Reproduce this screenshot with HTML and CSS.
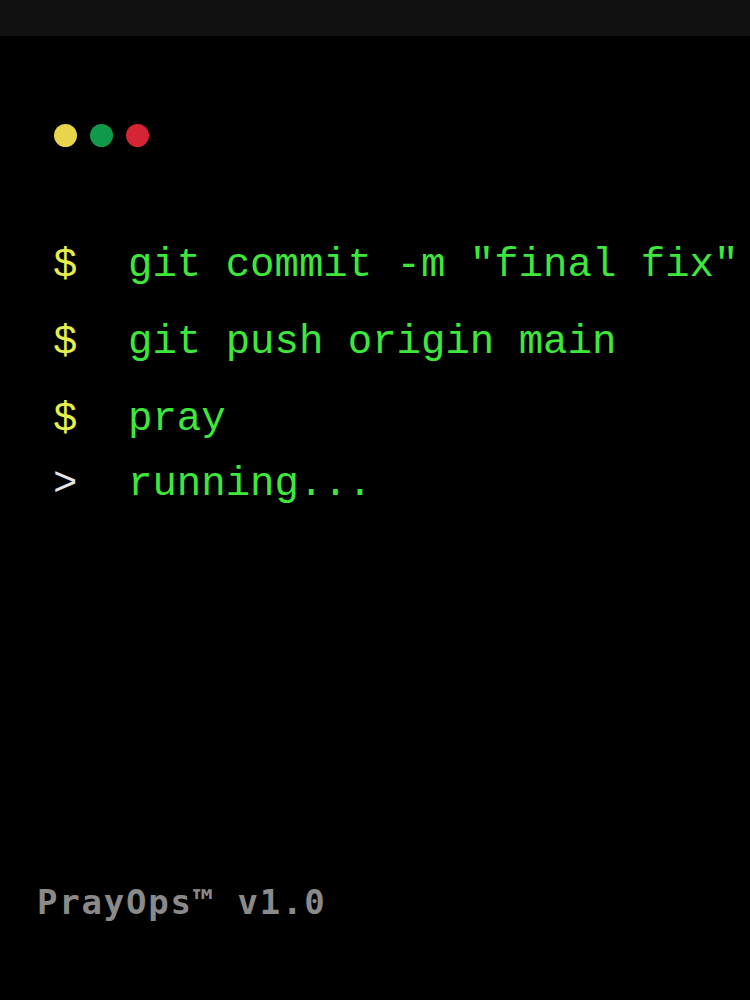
FILE: index.html
```html
<!DOCTYPE html>
<html lang="en">
<head>
<meta charset="utf-8">
<title>PrayOps</title>
<link rel="stylesheet" href="styles.css">
</head>
<body>
<div class="topbar"></div>
<main class="terminal">
  <div class="dots">
    <span class="dot dot-yellow"></span>
    <span class="dot dot-green"></span>
    <span class="dot dot-red"></span>
  </div>
  <div class="lines">
    <div class="line"><span class="prompt">$</span><span class="cmd">git commit -m "final fix"</span></div>
    <div class="line"><span class="prompt">$</span><span class="cmd">git push origin main</span></div>
    <div class="line"><span class="prompt">$</span><span class="cmd">pray</span></div>
    <div class="line line-output"><span class="prompt prompt-out">&gt;</span><span class="cmd">running...</span></div>
  </div>
  <footer class="brand">PrayOps™ v1.0</footer>
</main>
</body>
</html>
```

FILE: styles.css
```css
html, body {
  margin: 0;
  padding: 0;
  background: #000;
}

body {
  width: 750px;
  height: 1000px;
  overflow: hidden;
}

.topbar {
  height: 36px;
  background: #111111;
}

.terminal {
  padding: 88px 0 0 53px;
}

.dots {
  display: flex;
  gap: 13px;
  margin-left: 1px;
}

.dot {
  width: 23px;
  height: 23px;
  border-radius: 50%;
  display: block;
}

.dot-yellow { background: #e8d54c; }
.dot-green { background: #11994a; }
.dot-red { background: #d52433; }

.lines {
  margin-top: 80px;
  font-family: "Liberation Mono", "DejaVu Sans Mono", monospace;
  font-size: 40.7px;
  line-height: 77px;
}

.line {
  display: flex;
}

.line-output {
  line-height: 53px;
}

.prompt {
  width: 75px;
  color: #e6f04a;
  flex: none;
}

.prompt-out {
  color: #e4e4e4;
}

.cmd {
  color: #3ee83b;
  white-space: pre;
}

.brand {
  margin-top: 371px;
  margin-left: -16px;
  font-family: "DejaVu Sans Mono", monospace;
  font-weight: bold;
  font-size: 34px;
  line-height: 40px;
  letter-spacing: 1.8px;
  color: #8a8a8a;
}
```
